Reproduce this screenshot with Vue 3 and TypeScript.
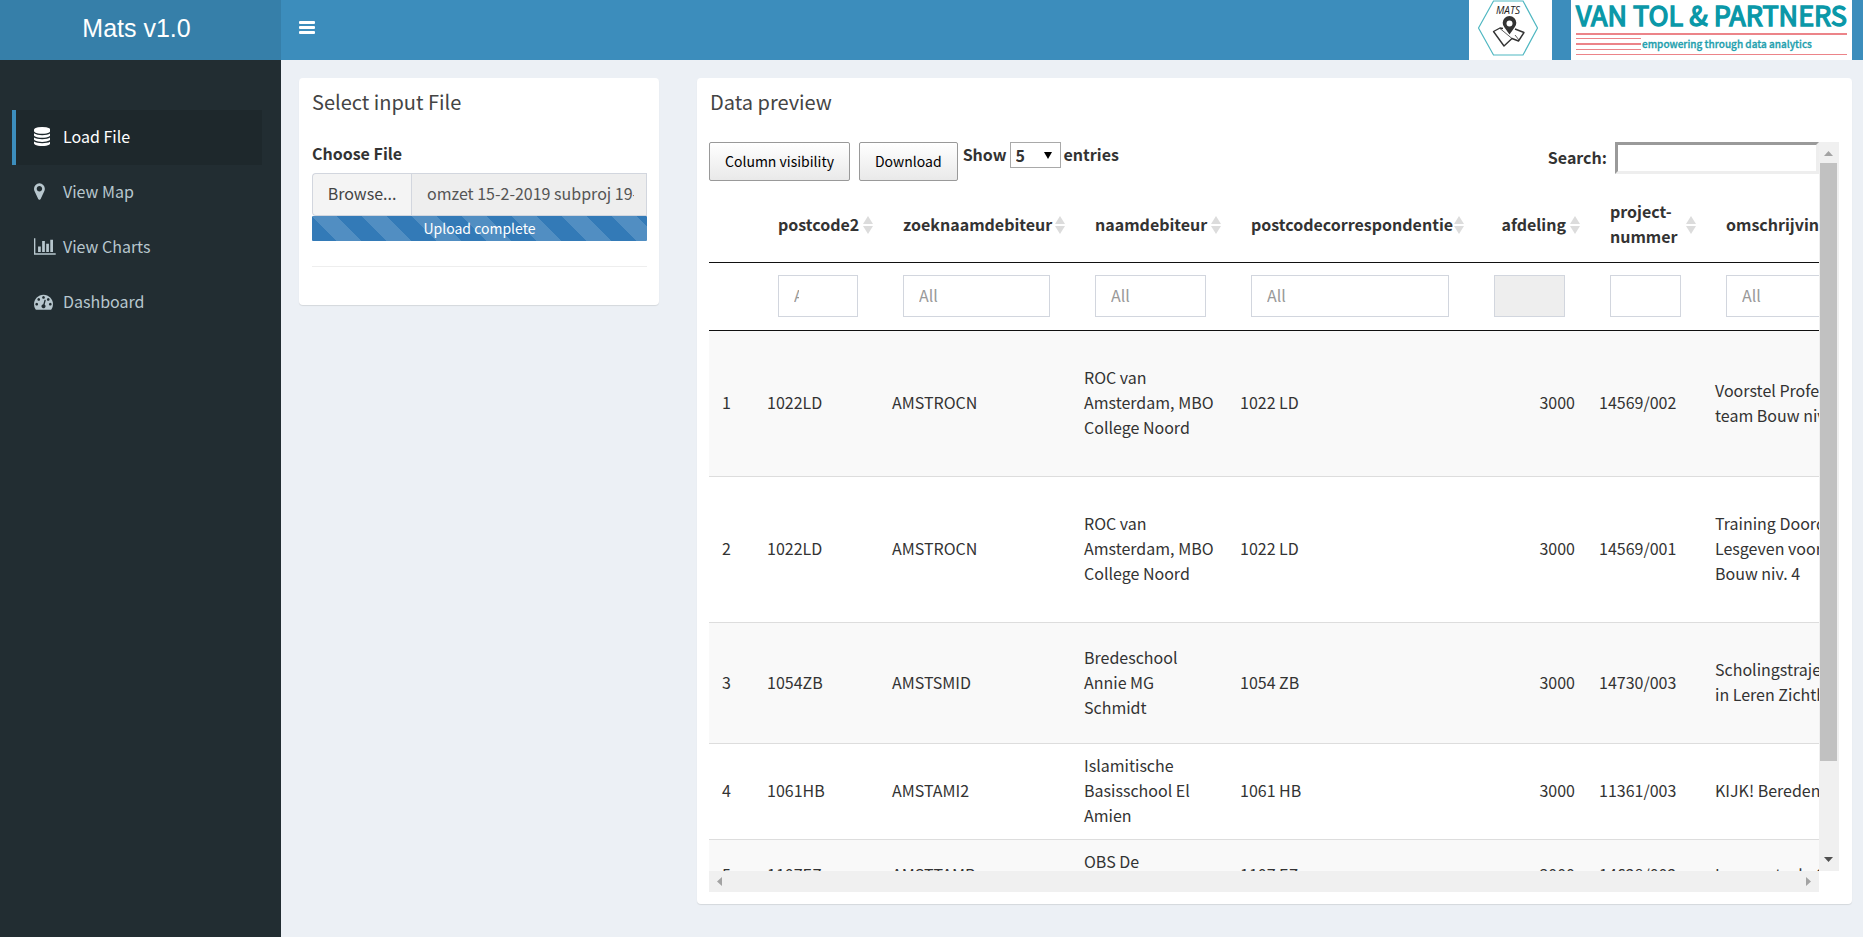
<script setup lang="ts">
import { ref } from 'vue'

interface MenuItem {
  label: string
  box: string
  path: string
}

interface Column {
  name: string
  label: string
  placeholder: string
  disabled?: boolean
  numeric?: boolean
}

interface Row {
  id: number
  lines: number
  cells: string[]
}

const menu: MenuItem[] = [
  {
    label: 'Load File',
    box: '0 0 1536 1792',
    path: 'M768 768q237 0 443-43t325-127v170q0 69-103 128t-280 93.5-385 34.5-385-34.5-280-93.5-103-128v-170q119 84 325 127t443 43zm0 768q237 0 443-43t325-127v170q0 69-103 128t-280 93.5-385 34.5-385-34.5-280-93.5-103-128v-170q119 84 325 127t443 43zm0-384q237 0 443-43t325-127v170q0 69-103 128t-280 93.5-385 34.5-385-34.5-280-93.5-103-128v-170q119 84 325 127t443 43zm0-1152q208 0 385 34.5t280 93.5 103 128v128q0 69-103 128t-280 93.5-385 34.5-385-34.5-280-93.5-103-128v-128q0-69 103-128t280-93.5 385-34.5z',
  },
  {
    label: 'View Map',
    box: '0 0 1024 1792',
    path: 'M768 640q0-106-75-181t-181-75-181 75-75 181 75 181 181 75 181-75 75-181zm256 0q0 109-33 179l-364 774q-16 33-47.5 52t-67.5 19-67.5-19-46.5-52l-365-774q-33-70-33-179 0-212 150-362t362-150 362 150 150 362z',
  },
  {
    label: 'View Charts',
    box: '0 0 2048 1792',
    path: 'M640 896v512h-256v-512h256zm384-512v1024h-256v-1024h256zm1024 1152v128h-2048v-1536h128v1408h1920zm-640-896v768h-256v-768h256zm384-384v1152h-256v-1152h256z',
  },
  {
    label: 'Dashboard',
    box: '0 0 1792 1792',
    path: 'M384 1152q0-53-37.5-90.5t-90.5-37.5-90.5 37.5-37.5 90.5 37.5 90.5 90.5 37.5 90.5-37.5 37.5-90.5zm192-448q0-53-37.5-90.5t-90.5-37.5-90.5 37.5-37.5 90.5 37.5 90.5 90.5 37.5 90.5-37.5 37.5-90.5zm428 481l101-382q6-26-7.5-48.5t-38.5-29.5-48 6.5-30 39.5l-101 382q-60 5-107 43.5t-63 98.5q-20 77 20 146t117 89 146-20 89-117q16-60-6-117t-72-91zm660-33q0-53-37.5-90.5t-90.5-37.5-90.5 37.5-37.5 90.5 37.5 90.5 90.5 37.5 90.5-37.5 37.5-90.5zm-640-640q0-53-37.5-90.5t-90.5-37.5-90.5 37.5-37.5 90.5 37.5 90.5 90.5 37.5 90.5-37.5 37.5-90.5zm448 192q0-53-37.5-90.5t-90.5-37.5-90.5 37.5-37.5 90.5 37.5 90.5 90.5 37.5 90.5-37.5 37.5-90.5zm320 448q0 261-141 483-19 29-54 29h-1402q-35 0-54-29-141-221-141-483 0-182 71-348t191-286 286-191 348-71 348 71 286 191 191 286 71 348z',
  },
]

const columns: Column[] = [
  { name: 'postcode', label: 'postcode2', placeholder: 'All' },
  { name: 'zoeknaam', label: 'zoeknaamdebiteur', placeholder: 'All' },
  { name: 'naam', label: 'naamdebiteur', placeholder: 'All' },
  { name: 'correspondentie', label: 'postcodecorrespondentie', placeholder: 'All' },
  { name: 'afdeling', label: 'afdeling', placeholder: '', disabled: true, numeric: true },
  { name: 'project', label: 'project-nummer', placeholder: '' },
  { name: 'omschrijving', label: 'omschrijving', placeholder: 'All' },
]

const rows: Row[] = [
  { id: 1, lines: 5, cells: ['1022LD', 'AMSTROCN', 'ROC van Amsterdam, MBO College Noord', '1022 LD', '3000', '14569/002', 'Voorstel Professionalisering\nteam Bouw niv. 4'] },
  { id: 2, lines: 5, cells: ['1022LD', 'AMSTROCN', 'ROC van Amsterdam, MBO College Noord', '1022 LD', '3000', '14569/001', 'Training Doordacht\nLesgeven voor team\nBouw niv. 4'] },
  { id: 3, lines: 4, cells: ['1054ZB', 'AMSTSMID', 'Bredeschool Annie MG Schmidt', '1054 ZB', '3000', '14730/003', 'Scholingstraject\nin Leren Zichtbaar'] },
  { id: 4, lines: 3, cells: ['1061HB', 'AMSTAMI2', 'Islamitische Basisschool El Amien', '1061 HB', '3000', '11361/003', 'KIJK! Beredeneerd'] },
  { id: 5, lines: 2, cells: ['1107EZ', 'AMSTTAMB', 'OBS De Tamboerijn', '1107 EZ', '3000', '14628/002', 'Leraren tech. School'] },
]

const LINE = 25
const rowHeight = (row: Row, index: number) => `${row.lines * LINE + (index ? 21 : 20)}px`

const active = ref('Load File')
const pageSize = ref('5')
const search = ref('')
const fileName = ref('omzet 15-2-2019 subproj 19-02.xlsx')
</script>

<template>
  <div class="page">
    <header class="topbar">
      <a class="brand" href="#">Mats v1.0</a>
      <nav class="navbar">
        <button class="toggle" type="button" aria-label="Toggle navigation">
          <svg viewBox="0 0 16 13" width="16" height="13">
            <rect width="16" height="3" rx="1" />
            <rect y="5" width="16" height="3" rx="1" />
            <rect y="10" width="16" height="3" rx="1" />
          </svg>
        </button>
        <div class="logos">
          <svg class="logo" viewBox="0 0 83 60" width="83" height="60">
            <polygon points="9.5,28 24.5,1 54,1 68.5,28 54,55 24.5,55" fill="none" stroke="#4fb7c1" stroke-width="1.2" />
            <text class="mats" x="27" y="14">MATS</text>
            <g fill="none" stroke="#333" stroke-width="1.4" stroke-linejoin="round">
              <path d="M34 28.5 31 28 24.5 31.5 35 46 43 38.5 49.5 41 55 32.5 46 29" />
              <path d="M31 28.5 43 38.5M46 35 50 40" stroke-width=".8" />
            </g>
            <path d="M40.5 34.5 35.5 27.5A6.8 6.8 0 1 1 45.5 27.5Z" fill="#333" />
            <circle cx="40.5" cy="23.5" r="3" fill="#fff" />
          </svg>
          <svg class="logo" viewBox="0 0 281 60" width="281" height="60">
            <text class="partners" x="5" y="26">VAN TOL &amp; PARTNERS</text>
            <g fill="#ec8489">
              <rect x="5" y="33" width="271" height="2" />
              <rect x="5" y="38" width="65" height="1" />
              <rect x="5" y="43" width="65" height="2" />
              <rect x="5" y="49" width="65" height="1" />
              <rect x="5" y="54" width="271" height="1" />
            </g>
            <text class="tagline" x="71" y="48">empowering through data analytics</text>
          </svg>
        </div>
      </nav>
    </header>

    <div class="layout">
      <aside class="sidebar">
        <ul class="menu">
          <li v-for="item in menu" :key="item.label">
            <a href="#" :class="{ active: active === item.label }" @click.prevent="active = item.label">
              <span class="menu-icon">
                <svg :viewBox="item.box" height="19"><path :d="item.path" /></svg>
              </span>
              {{ item.label }}
            </a>
          </li>
        </ul>
      </aside>

      <main class="content">
        <section class="box">
          <h3 class="box-title">Select input File</h3>
          <div class="box-body file-body">
            <label class="field-label" for="file-name">Choose File</label>
            <div class="file-group">
              <button class="browse" type="button">Browse...</button>
              <input id="file-name" v-model="fileName" class="file-name" type="text" readonly />
            </div>
            <div class="progress" role="progressbar" aria-valuenow="100">Upload complete</div>
            <hr class="rule" />
          </div>
        </section>

        <section class="box">
          <h3 class="box-title">Data preview</h3>
          <div class="box-body">
            <div class="scroller">
              <div class="viewport">
                <div class="toolbar">
                  <button class="dt-button" type="button">Column visibility</button>
                  <button class="dt-button" type="button">Download</button>
                  <label class="length">
                    Show
                    <span class="select-wrap">
                      <select v-model="pageSize">
                        <option>5</option>
                        <option>10</option>
                        <option>25</option>
                      </select>
                      <svg class="caret" viewBox="0 0 8 7" width="8" height="7"><path d="M0 0H8L4 7Z" /></svg>
                    </span>
                    entries
                  </label>
                  <label class="search">
                    Search:
                    <input v-model="search" type="search" />
                  </label>
                </div>
                <table class="data">
                  <colgroup>
                    <col class="c-id" />
                    <col v-for="c in columns" :key="c.name" :class="`c-${c.name}`" />
                  </colgroup>
                  <thead>
                    <tr>
                      <th></th>
                      <th v-for="c in columns" :key="c.name" :class="{ numeric: c.numeric }">
                        {{ c.label }}
                        <svg class="sort" viewBox="0 0 10 18" width="10" height="18">
                          <path d="M5 0 10 8H0ZM0 10H10L5 18Z" />
                        </svg>
                      </th>
                    </tr>
                    <tr class="filters">
                      <td></td>
                      <td v-for="c in columns" :key="c.name">
                        <input
                          type="text"
                          :aria-label="`Filter ${c.label}`"
                          :placeholder="c.placeholder"
                          :disabled="c.disabled"
                          :class="{ clearable: c.placeholder }"
                        />
                      </td>
                    </tr>
                  </thead>
                  <tbody>
                    <tr v-for="(row, r) in rows" :key="row.id" :style="{ height: rowHeight(row, r) }">
                      <td class="row-id">{{ row.id }}</td>
                      <td v-for="(cell, i) in row.cells" :key="i" :class="{ numeric: columns[i].numeric }">{{ cell }}</td>
                    </tr>
                  </tbody>
                </table>
              </div>
              <div class="bar vertical">
                <svg viewBox="0 0 9 5" width="9" height="5"><path class="dim" d="M0 5 4.5 0 9 5Z" /></svg>
                <div class="track"><div class="thumb"></div></div>
                <svg viewBox="0 0 9 5" width="9" height="5"><path d="M0 0H9L4.5 5Z" /></svg>
              </div>
              <div class="bar horizontal">
                <svg viewBox="0 0 5 9" width="5" height="9"><path class="dim" d="M5 0V9L0 4.5Z" /></svg>
                <svg viewBox="0 0 5 9" width="5" height="9"><path class="dim" d="M0 0V9L5 4.5Z" /></svg>
              </div>
            </div>
          </div>
        </section>
      </main>
    </div>
  </div>
</template>

<style>
body {
  margin: 0;
  background: #ecf0f5;
}
</style>

<style scoped>
* {
  box-sizing: border-box;
}

.page {
  display: flex;
  flex-direction: column;
  min-height: 100vh;
  font-family: 'Noto Sans CJK SC', 'Noto Sans', sans-serif;
  font-size: 16px;
  line-height: 25px;
  color: #333;
}

button,
input,
select {
  font: inherit;
  color: inherit;
  margin: 0;
}

.topbar {
  display: flex;
  height: 60px;
  background: #3c8dbc;
}

.brand {
  width: 281px;
  flex: none;
  padding-right: 8px;
  background: #367fa9;
  color: #fff;
  font-family: 'Liberation Sans', sans-serif;
  font-size: 25px;
  line-height: 56px;
  text-align: center;
  text-decoration: none;
}

.navbar {
  flex: 1;
  display: flex;
  justify-content: space-between;
}

.toggle {
  display: flex;
  align-items: center;
  padding: 0 18px 5px;
  border: 0;
  background: none;
  fill: #fff;
}

.logos {
  display: flex;
  gap: 19px;
  margin-right: 11px;
}

.logo {
  display: block;
  background: #fff;
}

.mats {
  font: italic 10px 'Open Sans', sans-serif;
  fill: #222;
}

.partners {
  font-size: 27px;
  font-weight: 400;
  fill: #0a98a8;
  stroke: #0a98a8;
  stroke-width: 1.4px;
}

.tagline {
  font-size: 10px;
  font-weight: 500;
  fill: #1f9fae;
  stroke: #1f9fae;
  stroke-width: 0.3px;
}

.layout {
  flex: 1;
  display: flex;
}

.sidebar {
  width: 281px;
  flex: none;
  background: #222d32;
}

.menu {
  list-style: none;
  margin: 50px 19px 0 12px;
  padding: 0;
}

.menu a {
  display: flex;
  align-items: center;
  height: 55px;
  padding: 0 0 2px 18px;
  border-left: 4px solid transparent;
  color: #b8c7ce;
  text-decoration: none;
}

.menu a.active {
  border-left-color: #3c8dbc;
  background: #1e282c;
  color: #fff;
}

.menu-icon {
  display: flex;
  width: 29px;
  fill: currentColor;
}

.content {
  flex: 1;
  min-width: 0;
  display: grid;
  grid-template-columns: minmax(0, 24fr) minmax(0, 77fr);
  gap: 38px;
  align-items: start;
  padding: 18px 11px 18px 18px;
}

.box {
  border-radius: 4px;
  background: #fff;
  box-shadow: 0 1px 1px rgba(0, 0, 0, 0.1);
}

.box-title {
  margin: 0;
  padding: 11px 12px 15px 13px;
  font-size: 20px;
  font-weight: 400;
  line-height: 25px;
  color: #444;
}

.box-body {
  padding: 13px 12px 12px;
}

.file-body {
  padding-left: 13px;
}

.field-label {
  display: block;
  margin-bottom: 8px;
  font-weight: 700;
  line-height: 23px;
}

.file-group {
  display: flex;
  height: 43px;
}

.browse {
  width: 99px;
  flex: none;
  padding: 0 0 2px;
  border: 1px solid #d2d6de;
  border-right: 0;
  border-radius: 4px 0 0 4px;
  background: #f4f4f4;
  color: #444;
}

.file-name {
  flex: 1;
  min-width: 0;
  padding: 0 12px 2px 15px;
  border: 1px solid #d2d6de;
  border-radius: 0;
  background: #eee;
  color: #555;
}

.progress {
  height: 25px;
  border-radius: 1px;
  background-color: #337ab7;
  background-image: linear-gradient(45deg, rgba(255, 255, 255, 0.15) 25%, transparent 25%, transparent 50%, rgba(255, 255, 255, 0.15) 50%, rgba(255, 255, 255, 0.15) 75%, transparent 75%);
  background-size: 50px 50px;
  color: #fff;
  font-size: 14px;
  line-height: 24px;
  text-align: center;
}

.rule {
  margin: 25px 0 26px;
  border: 0;
  border-top: 1px solid #eee;
}

.scroller {
  display: grid;
  grid-template-columns: minmax(0, 1fr) 20px;
  grid-template-rows: 729px 21px;
  margin-right: 1px;
}

.viewport {
  overflow: hidden;
}

.bar {
  display: flex;
  align-items: center;
  justify-content: space-between;
  background: #f0f0f0;
  fill: #505050;
}

.dim {
  fill: #a3a3a3;
}

.vertical {
  flex-direction: column;
  padding: 9px 2px 9px 1px;
}

.horizontal {
  padding: 0 8px;
}

.track {
  flex: 1;
  align-self: stretch;
  padding: 7px 0;
}

.thumb {
  height: 87%;
  background: #c1c1c1;
}

.toolbar {
  display: flex;
  align-items: flex-start;
  height: 46px;
}

.dt-button {
  height: 39px;
  margin-right: 9px;
  padding: 0 15px;
  border: 1px solid #999;
  border-radius: 2px;
  background: linear-gradient(#fff, #e9e9e9);
  color: #000;
  font-size: 14px;
}

.dt-button + .dt-button {
  margin-right: 5px;
}

.length {
  display: flex;
  gap: 3px;
  font-weight: 700;
  line-height: 24px;
}

.select-wrap {
  position: relative;
  display: flex;
}

.length select {
  appearance: none;
  width: 51px;
  height: 26px;
  padding: 0 5px;
  border: 1px solid #a9a9a9;
  border-radius: 0;
  background: #fff;
  font-weight: 700;
  line-height: 22px;
}

.caret {
  position: absolute;
  top: 10px;
  right: 9px;
  pointer-events: none;
}

.search {
  display: flex;
  gap: 8px;
  margin-left: auto;
  font-weight: 700;
  line-height: 30px;
}

.search input {
  width: 204px;
  height: 32px;
  padding: 1px 3px;
  border: 3px solid;
  border-color: #9a9a9a #eee #eee #9a9a9a;
  border-radius: 0;
  background: #fff;
  font-weight: 400;
}

.data {
  table-layout: fixed;
  width: 1300px;
  border-collapse: separate;
  border-spacing: 0;
}

.c-id {
  width: 47px;
}

.c-postcode {
  width: 125px;
}

.c-zoeknaam {
  width: 192px;
}

.c-naam {
  width: 156px;
}

.c-correspondentie {
  width: 243px;
}

.c-afdeling,
.c-project {
  width: 116px;
}

.data th {
  position: relative;
  height: 75px;
  padding: 11px 22px 13px;
  border-bottom: 1px solid #111;
  font-weight: 700;
  text-align: left;
}

.data .numeric {
  text-align: right;
}

.sort {
  position: absolute;
  top: 28px;
  right: 8px;
  fill: #dcdcdc;
}

.filters td {
  padding: 12px 23px 13px 22px;
  border-bottom: 1px solid #111;
  line-height: 0;
}

.filters input {
  width: 100%;
  height: 42px;
  padding: 0 15px 2px;
  border: 1px solid #d2d6de;
  border-radius: 0;
  background: #fff;
  line-height: 25px;
}

.filters input.clearable {
  padding-right: 58px;
}

.filters input:disabled {
  background: #eee;
}

.filters input::placeholder {
  color: #999;
}

.data tbody td {
  padding: 9px 13px 11px 11px;
  border-top: 1px solid #ddd;
  vertical-align: middle;
  white-space: pre-line;
}

.data tbody .row-id {
  padding-left: 13px;
}

.data tbody tr:first-child td {
  border-top: 0;
}

.data tbody tr:nth-child(odd) {
  background: #f9f9f9;
}
</style>
